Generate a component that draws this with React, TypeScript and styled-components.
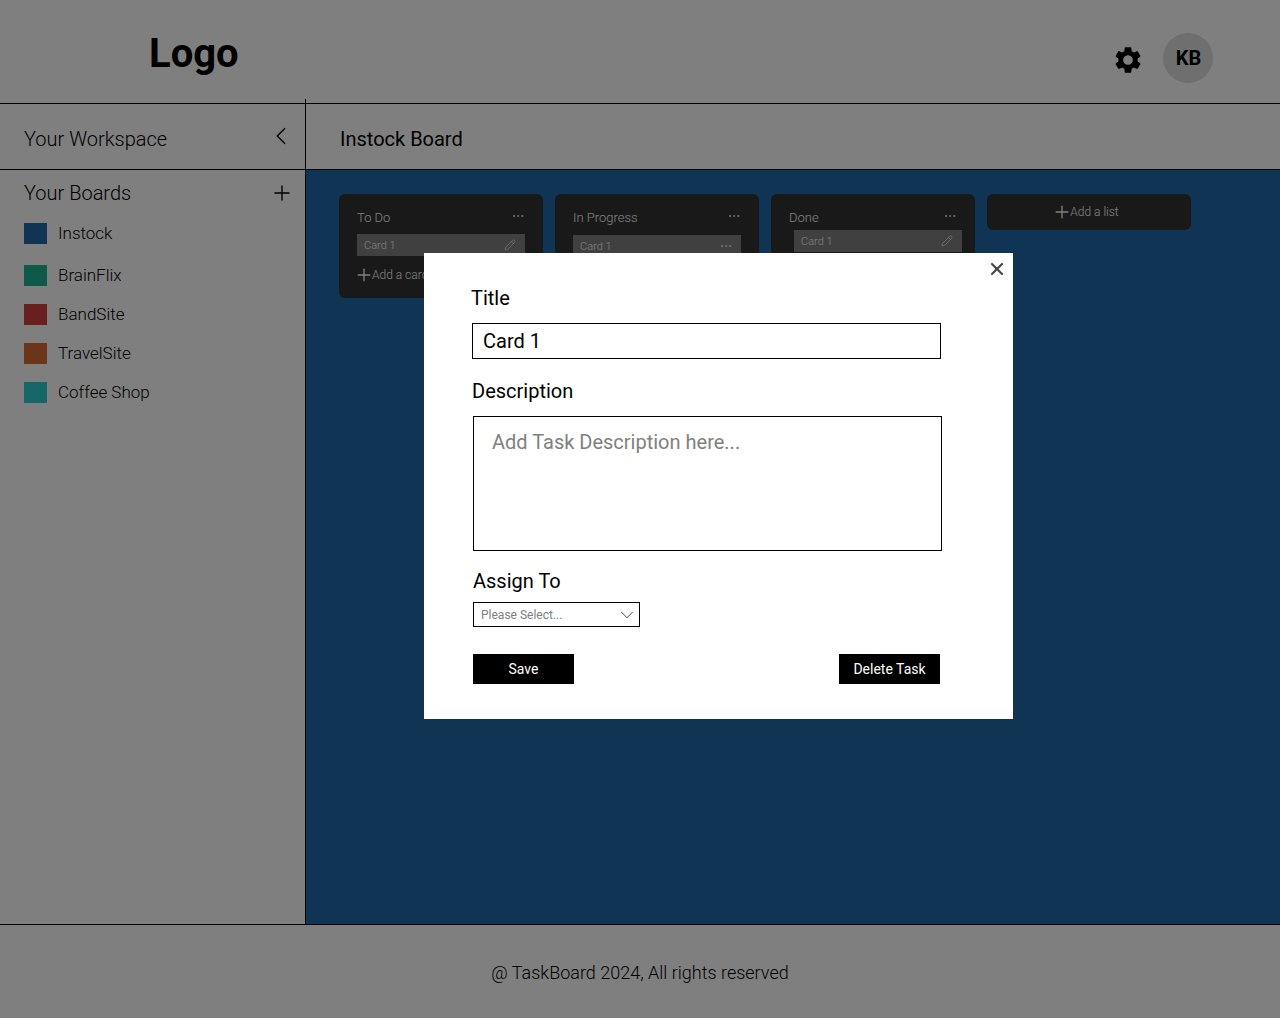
import styled, { createGlobalStyle } from "styled-components";
import { ChevronDown, ChevronLeft, Ellipsis, Pencil, Plus, X } from "lucide-react";
import { MdSettings } from "react-icons/md";

const boards = [
  { name: "Instock", color: "#206ba8", gap: 21 },
  { name: "BrainFlix", color: "#1fb394", gap: 18 },
  { name: "BandSite", color: "#d13e3e", gap: 18 },
  { name: "TravelSite", color: "#d66a32", gap: 18 },
  { name: "Coffee Shop", color: "#2dcdd0", gap: 18 }
];

const GlobalStyle = createGlobalStyle`
  html, body {
    margin: 0;
    background: #fff;
    font-family: Roboto, "Liberation Sans", sans-serif;
  }
  * {
    box-sizing: border-box;
  }
`;

const Page = styled.div`
  width: 1280px;
  height: 1018px;
  display: flex;
  flex-direction: column;
  overflow: hidden;
`;

const Header = styled.header`
  height: 104px;
  flex: none;
  display: flex;
  align-items: center;
  justify-content: space-between;
  padding: 0 67px 0 149px;
  border-bottom: 1px solid #000;
`;

const Logo = styled.div`
  font-size: 40px;
  font-weight: 700;
  color: #000;
  margin-top: 3px;
`;

const HeaderRight = styled.div`
  display: flex;
  align-items: center;
  gap: 19px;
  margin-top: 12px;
`;

const Gear = styled(MdSettings)`
  width: 32px;
  height: 32px;
  margin-top: 4px;
  color: #000;
`;

const Avatar = styled.div`
  width: 50px;
  height: 50px;
  border-radius: 50%;
  background: #dedede;
  display: flex;
  align-items: center;
  justify-content: center;
  padding-left: 1px;
  font-size: 20px;
  font-weight: 700;
`;

const Body = styled.div`
  flex: 1;
  display: flex;
  min-height: 0;
`;

const Sidebar = styled.aside`
  width: 306px;
  flex: none;
  margin-top: -5px;
  padding-top: 5px;
  border-right: 1px solid #000;
`;

const SideTop = styled.div`
  height: 66px;
  display: flex;
  align-items: center;
  justify-content: space-between;
  padding: 4px 9px 0 24px;
  border-bottom: 1px solid #000;
  font-size: 20px;
  font-weight: 300;
`;

const Collapse = styled(ChevronLeft)`
  width: 30px;
  height: 30px;
  margin-top: -6px;
  color: #000;
  stroke-width: 1.1;
`;

const BoardsHead = styled.div`
  height: 45px;
  display: flex;
  align-items: center;
  justify-content: space-between;
  padding: 0 11px 0 24px;
  font-size: 20px;
  font-weight: 300;
`;

const AddBoard = styled(Plus)`
  width: 24px;
  height: 24px;
  stroke-width: 1.4;
`;

const BoardList = styled.ul`
  list-style: none;
  margin: 8px 0 0;
  padding: 0 0 0 24px;
`;

const BoardRow = styled.li<{ $gap: number }>`
  display: flex;
  align-items: center;
  gap: 11px;
  height: 21px;
  margin-bottom: ${p => p.$gap}px;
  font-size: 17px;
  font-weight: 300;
`;

const Swatch = styled.span<{ $color: string }>`
  width: 23px;
  height: 21px;
  background: ${p => p.$color};
`;

const BoardName = styled.span`
  margin-bottom: 2px;
`;

const Main = styled.main`
  flex: 1;
  display: flex;
  flex-direction: column;
  min-width: 0;
`;

const BoardTitle = styled.div`
  height: 66px;
  flex: none;
  display: flex;
  align-items: center;
  padding: 4px 0 0 34px;
  font-size: 20px;
  border-bottom: 1px solid #000;
`;

const Canvas = styled.div`
  flex: 1;
  display: flex;
  align-items: flex-start;
  gap: 12px;
  padding: 24px 0 0 33px;
  background: #206ba8;
`;

const List = styled.section`
  position: relative;
  width: 204px;
  height: 104px;
  border-radius: 6px;
  background: #333;
  padding: 14px 18px 0;
`;

const ListHead = styled.div`
  display: flex;
  align-items: center;
  justify-content: space-between;
  height: 18px;
  font-size: 13px;
  font-weight: 300;
  color: #fff;
`;

const Dots = styled(Ellipsis)`
  width: 14px;
  height: 14px;
  margin: -3px 0 0 0;
  color: #eee;
  stroke-width: 1.6;
`;

const CardDots = styled(Dots)`
  margin: 0 -1px 0 0;
`;

const Card = styled.div<{ $shiftX?: number; $shiftY?: number }>`
  width: 168px;
  height: 22px;
  display: flex;
  align-items: center;
  justify-content: space-between;
  margin-top: ${p => 8 + (p.$shiftY ?? 0)}px;
  margin-left: ${p => p.$shiftX ?? 0}px;
  padding: 0 9px 0 7px;
  background: #808080;
  font-size: 11px;
  font-weight: 300;
  color: #fff;
`;

const Edit = styled(Pencil)`
  width: 12px;
  height: 12px;
  color: #fff;
  stroke-width: 1.3;
`;

const AddCard = styled.div`
  display: flex;
  align-items: center;
  gap: 3px;
  margin-top: 12px;
  font-size: 12px;
  font-weight: 300;
  color: #fff;
`;

const AddList = styled.div`
  width: 204px;
  height: 36px;
  border-radius: 6px;
  background: #333;
  display: flex;
  align-items: center;
  justify-content: center;
  gap: 3px;
  padding-right: 4px;
  font-size: 12px;
  font-weight: 300;
  color: #fff;
`;

const AddIcon = styled(Plus)`
  width: 20px;
  height: 20px;
  margin: -4px -5px -4px -3px;
  stroke-width: 1.6;
  color: #fff;
`;

const Footer = styled.footer`
  height: 94px;
  flex: none;
  display: flex;
  align-items: center;
  justify-content: center;
  padding-top: 2px;
  border-top: 1px solid #000;
  font-size: 18px;
  font-weight: 300;
`;

const Overlay = styled.div`
  position: fixed;
  inset: 0;
  background: rgba(0, 0, 0, 0.5);
  padding: 253px 0 0 424px;
`;

const Modal = styled.div`
  position: relative;
  width: 589px;
  height: 466px;
  background: #fff;
  padding: 32px 0 0 47px;
  color: #000;
`;

const Close = styled(X)`
  position: absolute;
  top: 6px;
  right: 6px;
  width: 20px;
  height: 20px;
  color: #444;
  stroke-width: 2.6;
`;

const Label = styled.label<{ $indent?: number; $top?: number }>`
  display: block;
  margin-left: ${p => p.$indent ?? 0}px;
  margin-top: ${p => p.$top ?? 0}px;
  font-size: 20px;
  line-height: 26px;
`;

const TextInput = styled.input`
  display: block;
  width: 469px;
  height: 36px;
  margin: 12px 0 0 1px;
  padding: 0 10px;
  border: 1px solid #000;
  border-radius: 0;
  font: 400 20px Roboto, sans-serif;
  color: #000;
  outline: none;
`;

const TextArea = styled.textarea`
  display: block;
  width: 469px;
  height: 135px;
  margin: 12px 0 0 2px;
  padding: 13px 18px;
  border: 1px solid #000;
  border-radius: 0;
  font: 400 20px Roboto, sans-serif;
  resize: none;
  outline: none;
  &::placeholder {
    color: #808080;
    opacity: 1;
  }
`;

const Select = styled.div`
  width: 167px;
  height: 25px;
  display: flex;
  align-items: center;
  justify-content: space-between;
  margin: 8px 0 0 2px;
  padding: 0 1px 0 7px;
  border: 1px solid #000;
  font-size: 12px;
  color: #808080;
`;

const SelectArrow = styled(ChevronDown)`
  width: 22px;
  height: 22px;
  color: #666;
  stroke-width: 1.1;
`;

const Actions = styled.div`
  width: 467px;
  display: flex;
  justify-content: space-between;
  margin: 27px 0 0 2px;
`;

const Button = styled.button`
  width: 101px;
  height: 30px;
  border: none;
  border-radius: 0;
  background: #000;
  color: #fff;
  font: 400 14px Roboto, sans-serif;
`;

const App = () => {
  return (
    <>
      <GlobalStyle />
      <Page>
        <Header>
          <Logo>Logo</Logo>
          <HeaderRight>
            <Gear />
            <Avatar>KB</Avatar>
          </HeaderRight>
        </Header>
        <Body>
          <Sidebar>
            <SideTop>
              Your Workspace
              <Collapse />
            </SideTop>
            <BoardsHead>
              Your Boards
              <AddBoard />
            </BoardsHead>
            <BoardList>
              {boards.map(b => (
                <BoardRow key={b.name} $gap={b.gap}>
                  <Swatch $color={b.color} />
                  <BoardName>{b.name}</BoardName>
                </BoardRow>
              ))}
            </BoardList>
          </Sidebar>
          <Main>
            <BoardTitle>Instock Board</BoardTitle>
            <Canvas>
              <List>
                <ListHead>
                  To Do
                  <Dots />
                </ListHead>
                <Card>
                  Card 1
                  <Edit />
                </Card>
                <AddCard>
                  <AddIcon />
                  Add a card
                </AddCard>
              </List>
              <List>
                <ListHead>
                  In Progress
                  <Dots />
                </ListHead>
                <Card $shiftY={1}>
                  Card 1
                  <CardDots />
                </Card>
                <AddCard>
                  <AddIcon />
                  Add a card
                </AddCard>
              </List>
              <List>
                <ListHead>
                  Done
                  <Dots />
                </ListHead>
                <Card $shiftX={5} $shiftY={-4}>
                  Card 1
                  <Edit />
                </Card>
                <AddCard>
                  <AddIcon />
                  Add a card
                </AddCard>
              </List>
              <AddList>
                <AddIcon />
                Add a list
              </AddList>
            </Canvas>
          </Main>
        </Body>
        <Footer>@ TaskBoard 2024, All rights reserved</Footer>
      </Page>
      <Overlay>
        <Modal>
          <Close />
          <Label>Title</Label>
          <TextInput defaultValue="Card 1" />
          <Label $indent={1} $top={19}>
            Description
          </Label>
          <TextArea placeholder="Add Task Description here..." />
          <Label $indent={2} $top={17}>
            Assign To
          </Label>
          <Select>
            Please Select...
            <SelectArrow />
          </Select>
          <Actions>
            <Button>Save</Button>
            <Button>Delete Task</Button>
          </Actions>
        </Modal>
      </Overlay>
    </>
  );
};

export default App;
